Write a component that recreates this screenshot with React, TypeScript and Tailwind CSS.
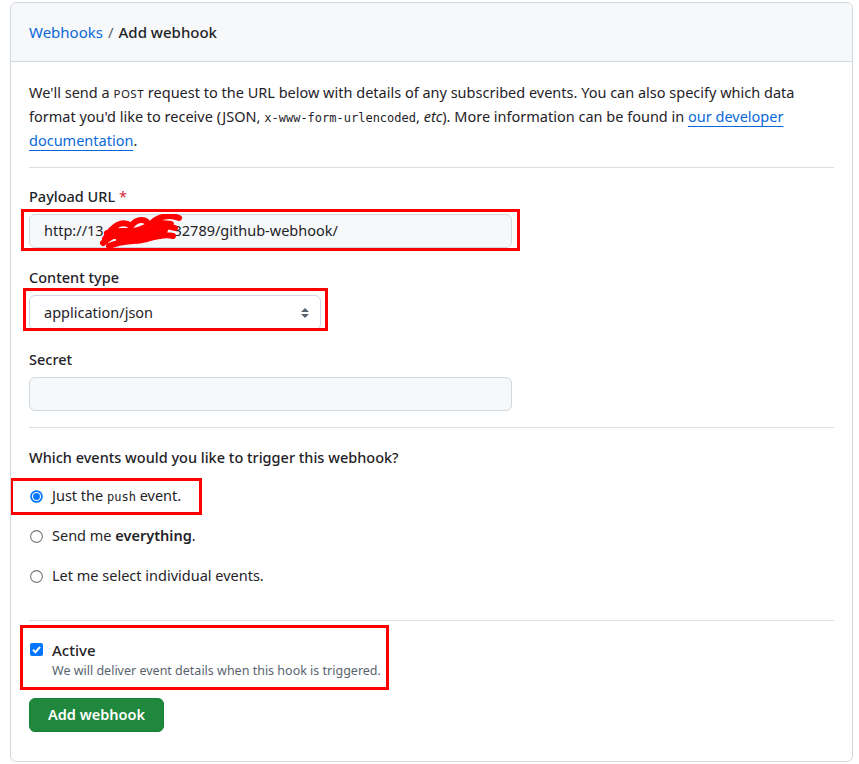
import React from "react";

const font = { fontFamily: '"Noto Sans", "Liberation Sans", sans-serif' };
const mono = { fontFamily: '"DejaVu Sans Mono", "Liberation Mono", monospace' };

function Radio({ checked }: { checked?: boolean }) {
  return (
    <svg width="13" height="13" viewBox="0 0 13 13" className="shrink-0">
      {checked ? (
        <>
          <circle cx="6.5" cy="6.5" r="6.3" fill="#0075ff" />
          <circle cx="6.5" cy="6.5" r="4.6" fill="#ffffff" />
          <circle cx="6.5" cy="6.5" r="3.4" fill="#0075ff" />
        </>
      ) : (
        <circle cx="6.5" cy="6.5" r="5.9" fill="#fff" stroke="#767676" strokeWidth="1.1" />
      )}
    </svg>
  );
}

export default function App() {
  return (
    <div className="min-h-[764px] bg-white pt-[2px] pl-[10px] pr-[6px] text-[#1f2328]" style={font}>
      <div className="border border-[#d1d9e0] rounded-[6px] overflow-hidden">
        <div className="h-[59px] bg-[#f6f8fa] border-b border-[#d1d9e0] flex items-center px-[18px] text-[15px]">
          <a className="text-[#0969da]">Webhooks</a>
          <span className="mx-[5px] text-[#59636e]">/</span>
          <span className="font-medium">Add webhook</span>
        </div>
        <div className="px-[18px] pt-[18px] pb-[29px] text-[14.5px]">
          <p className="leading-[24px] whitespace-nowrap">
            We'll send a <span className="text-[11.5px] tracking-[0.5px] leading-none">POST</span> request to the URL
            below with details of any subscribed events. You can also specify which data
            <br />
            format you'd like to receive (JSON,{" "}
            <code className="text-[12px] leading-none" style={mono}>
              x-www-form-urlencoded
            </code>
            , <em>etc</em>). More information can be found in{" "}
            <a className="text-[#0969da] underline underline-offset-[4px]">
              our developer
              <br />
              documentation
            </a>
            .
          </p>
          <div className="mt-[15px] h-px bg-[#d8dee4]" />

          <div className="mt-[18px] leading-[20px] font-medium">
            Payload URL <span className="text-[#d1242f] font-normal">*</span>
          </div>
          <div className="relative mt-[8px] w-[483px]">
            <div className="h-[34px] rounded-[6px] border border-[#d1d9e0] bg-[#f6f8fa] flex items-center px-[14px] whitespace-nowrap">
              <span>http://13</span>
              <span className="inline-block w-[66px]" />
              <span>.32789/github-webhook/</span>
            </div>
            <svg className="absolute left-[70px] top-[0px]" width="84" height="36" viewBox="0 0 84 36">
              <path
                d="M6 25 C14 10, 24 6, 32 12 C38 4, 48 4, 50 12 C58 2, 70 0, 80 4 M4 29 C16 18, 28 16, 40 22 C50 14, 64 10, 76 14 M10 32 C24 26, 36 28, 48 25 C58 22, 66 20, 74 22 M8 19 C20 14, 30 20, 42 15 C52 10, 62 8, 72 10 M20 26 C34 18, 50 18, 66 16 M14 22 C30 22, 46 20, 62 22"
                stroke="#ff0000"
                strokeWidth="6"
                fill="none"
                strokeLinecap="round"
              />
            </svg>
            <div className="absolute -left-[8px] -right-[8px] -top-[5px] -bottom-[3px] border-[3px] border-[#ff0000]" />
          </div>

          <div className="mt-[19px] leading-[20px] font-medium">Content type</div>
          <div className="relative mt-[8px] w-[292px]">
            <div className="h-[35px] rounded-[6px] border border-[#d1d9e0] bg-white flex items-center justify-between pl-[14px] pr-[10px]">
              <span>application/json</span>
              <svg width="10" height="14" viewBox="0 0 10 14">
                <path d="M5 2 L9 6 H1 Z" fill="#59636e" />
                <path d="M5 12 L9 8 H1 Z" fill="#59636e" />
              </svg>
            </div>
            <div className="absolute -left-[6px] -right-[7px] -top-[7px] -bottom-[1px] border-[3px] border-[#ff0000]" />
          </div>

          <div className="mt-[19px] leading-[20px] font-medium">Secret</div>
          <div className="mt-[8px] w-[483px] h-[34px] rounded-[6px] border border-[#d1d9e0] bg-[#f6f8fa]" />

          <div className="mt-[16px] h-px bg-[#d8dee4]" />

          <div className="mt-[19px] leading-[20px] font-medium">Which events would you like to trigger this webhook?</div>
          <div className="mt-[9px]">
            <div className="relative h-[40px] flex items-center gap-[9px] pl-[1px]">
              <Radio checked />
              <span>
                Just the <code className="text-[12px] leading-none" style={mono}>push</code> event.
              </span>
              <div className="absolute -left-[19px] top-[2px] w-[192px] h-[37px] border-[3px] border-[#ff0000]" />
            </div>
            <div className="h-[40px] flex items-center gap-[9px] pl-[1px]">
              <Radio />
              <span>
                Send me <span className="font-semibold">everything</span>.
              </span>
            </div>
            <div className="h-[40px] flex items-center gap-[9px] pl-[1px]">
              <Radio />
              <span>Let me select individual events.</span>
            </div>
          </div>

          <div className="mt-[24px] h-px bg-[#d8dee4]" />

          <div className="relative mt-[19px] flex gap-[9px] pl-[1px]">
            <svg width="13" height="13" viewBox="0 0 13 13" className="mt-[3px] shrink-0">
              <rect x="0" y="0" width="13" height="13" rx="2" fill="#0075ff" />
              <path d="M3 6.8 L5.5 9.2 L10 3.8" stroke="#fff" strokeWidth="2" fill="none" />
            </svg>
            <div>
              <div className="leading-[20px] font-medium text-[15px]">Active</div>
              <div className="mt-[2px] text-[12.5px] leading-[18px] text-[#59636e]">
                We will deliver event details when this hook is triggered.
              </div>
            </div>
            <div className="absolute -left-[9px] -top-[15px] w-[369px] h-[65px] border-[3px] border-[#ff0000]" />
          </div>

          <button className="mt-[18px] h-[34px] px-[18px] rounded-[6px] bg-[#1f883d] border border-[#1a7f37] text-white font-semibold text-[14.5px]">
            Add webhook
          </button>
        </div>
      </div>
    </div>
  );
}
